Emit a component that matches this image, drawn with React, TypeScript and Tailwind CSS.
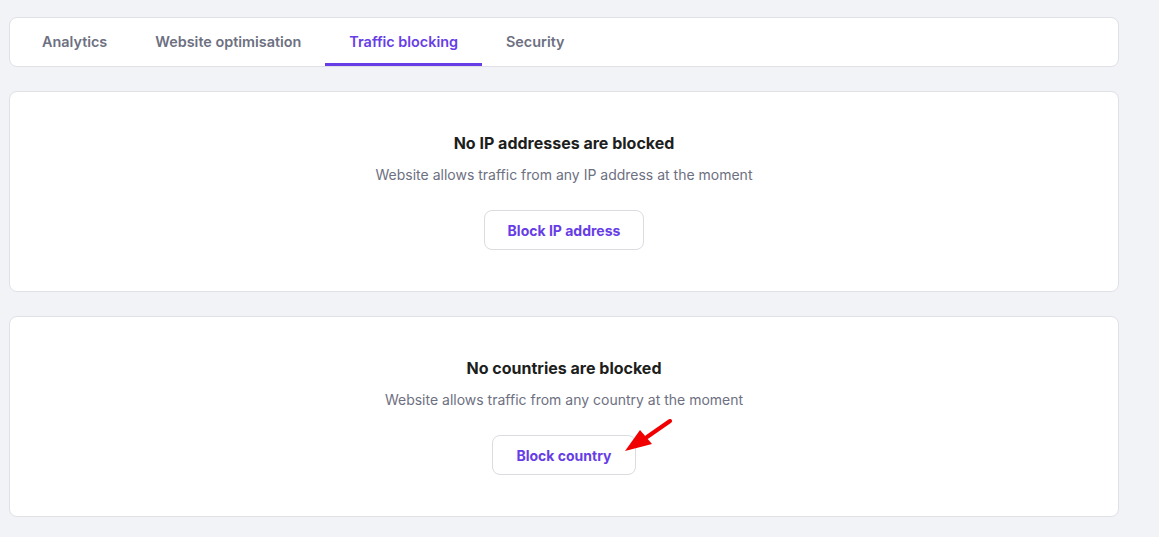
import { ReactNode } from 'react';

const tabs = ['Analytics', 'Website optimisation', 'Traffic blocking', 'Security'];

function EmptyCard({ title, text, action, children }: { title: string; text: string; action: string; children?: ReactNode }) {
  return (
    <div className="bg-white border border-[#dfe1e6] rounded-lg h-[201px] flex flex-col items-center pt-[39px]">
      <h3 className="text-[16px] leading-6 font-bold text-[#1d1e20]">{title}</h3>
      <p className="mt-2 text-[14px] leading-6 text-[#6d7081]">{text}</p>
      <div className="relative mt-[23px]">
        <button className="h-10 px-[23px] rounded-lg border border-[#dadce0] bg-white text-[14px] font-bold text-[#673de6]">
          {action}
        </button>
        {children}
      </div>
    </div>
  );
}

export default function App() {
  return (
    <div className="min-h-[537px] bg-[#f2f3f6] pt-[17px] pl-[9px] pr-[40px] pb-5" style={{ fontFamily: 'Inter, "DejaVu Sans", sans-serif' }}>
      <div className="flex flex-col gap-[24px] w-[1110px]">
        {/* Tabs */}
        <div className="bg-white border border-[#dfe1e6] rounded-lg h-[50px] flex px-[8px]">
          {tabs.map((t) => {
            const active = t === 'Traffic blocking';
            return (
              <button
                key={t}
                className={
                  active
                    ? 'px-6 h-full text-[14.4px] font-semibold text-[#673de6] border-b-[3px] border-[#673de6] pt-[3px]'
                    : 'px-6 h-full text-[14.4px] font-semibold text-[#6d7081] border-b-[3px] border-transparent pt-[3px]'
                }
              >
                {t}
              </button>
            );
          })}
        </div>

        <EmptyCard
          title="No IP addresses are blocked"
          text="Website allows traffic from any IP address at the moment"
          action="Block IP address"
        />

        <EmptyCard
          title="No countries are blocked"
          text="Website allows traffic from any country at the moment"
          action="Block country"
        >
          {/* red pointer arrow */}
          <svg className="absolute left-[131px] top-[-16px] pointer-events-none" width="50" height="36" viewBox="0 0 50 36">
            <line x1="47" y1="2" x2="24" y2="18" stroke="#f00000" strokeWidth="4" strokeLinecap="round" />
            <polygon points="2,32 17,11 29,25" fill="#f00000" />
          </svg>
        </EmptyCard>
      </div>
    </div>
  );
}
